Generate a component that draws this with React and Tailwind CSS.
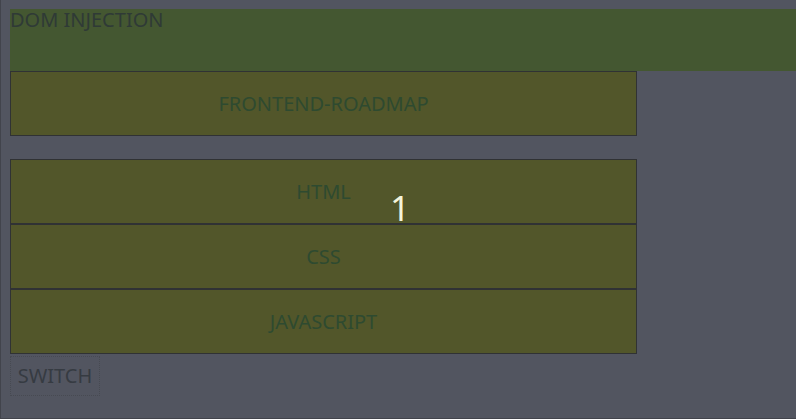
const items = ["HTML", "CSS", "JAVASCRIPT"];

const App = () => {
  return (
    <div
      className="relative h-[419px] w-[796px] overflow-hidden bg-[#525560] border-l border-b border-[#42444c] pt-[9px] pl-[9px]"
      style={{ fontFamily: '"Noto Sans", "Open Sans", sans-serif' }}
    >
      <div className="h-[62px] bg-[#445731] text-[20px] leading-[22px] text-[#2f3a36]">
        DOM INJECTION
      </div>

      <div className="flex h-[65px] w-[627px] items-center justify-center border border-[#303234] bg-[#52562a] text-[20px] text-[#2e4a30]">
        FRONTEND-ROADMAP
      </div>

      <ul className="mt-[23px] w-[627px]">
        {items.map((item) => (
          <li
            key={item}
            className="flex h-[65px] items-center justify-center border border-[#303234] bg-[#52562a] text-[20px] text-[#2e4a30]"
          >
            {item}
          </li>
        ))}
      </ul>

      <span className="absolute left-[389px] top-[186px] text-[35px] leading-[44px] text-[#f4f4dc]">
        1
      </span>

      <button className="mt-[2px] h-[40px] w-[90px] border border-dotted border-[#474a52] text-[20px] text-[#363b42]">
        SWITCH
      </button>
    </div>
  );
};

export default App;
